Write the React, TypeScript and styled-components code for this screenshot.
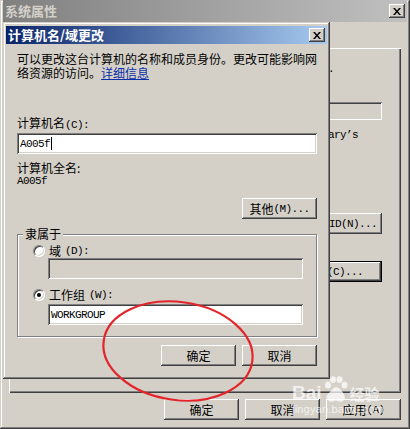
import React from 'react';
import styled, { createGlobalStyle, css } from 'styled-components';

const face = '#d4d0c8';
const shadow = '#808080';
const darkShadow = '#404040';
const highlight = '#ffffff';

const GlobalStyle = createGlobalStyle`
  html, body {
    margin: 0;
    padding: 0;
    background: ${face};
    overflow: hidden;
  }

  body {
    font-family: 'Noto Sans CJK SC', 'Liberation Sans', sans-serif;
    font-size: 12px;
    line-height: 14px;
    color: #000;
  }
`;

const windowEdge = css`
  box-shadow:
    inset -1px -1px ${darkShadow},
    inset 1px 1px ${face},
    inset -2px -2px ${shadow},
    inset 2px 2px ${highlight};
`;

const raisedEdge = css`
  box-shadow:
    inset -1px -1px ${darkShadow},
    inset 1px 1px ${highlight},
    inset -2px -2px ${shadow},
    inset 2px 2px ${face};
`;

const defaultEdge = css`
  box-shadow:
    inset -1px -1px #000,
    inset 1px 1px #000,
    inset -2px -2px ${darkShadow},
    inset 2px 2px ${highlight},
    inset -3px -3px ${shadow};
`;

const sunkenEdge = css`
  box-shadow:
    inset 1px 1px ${shadow},
    inset -1px -1px ${highlight},
    inset 2px 2px ${darkShadow},
    inset -2px -2px ${face};
`;

const Screen = styled.div`
  position: relative;
  width: 410px;
  height: 429px;
  overflow: hidden;
`;

const Latin = styled.span`
  font-family: 'Liberation Mono', monospace;
  font-size: 11px;
  letter-spacing: -0.6px;
`;

/* ---------- window chrome ---------- */

const OuterWindow = styled.div`
  box-sizing: border-box;
  width: 410px;
  height: 429px;
  padding: 0 3px 3px;
  display: flex;
  flex-direction: column;
  background: ${face};
  ${windowEdge}
`;

const TitleBar = styled.div<{ $active?: boolean }>`
  flex: none;
  display: flex;
  align-items: center;
  justify-content: space-between;
  height: ${(p) => (p.$active ? 18 : 22)}px;
  padding: 0 2px;
  background: ${(p) =>
    p.$active
      ? 'linear-gradient(to right, #0a246a, #a6caf0)'
      : 'linear-gradient(to right, #808080, #c0c0c0)'};
  color: ${(p) => (p.$active ? '#fff' : face)};
  font-size: 13px;
  font-weight: bold;
  line-height: 16px;
`;

const CloseButton = styled.div`
  box-sizing: border-box;
  width: 16px;
  height: 14px;
  display: flex;
  align-items: center;
  justify-content: center;
  background: ${face};
  ${raisedEdge}
`;

const CloseGlyph = () => (
  <svg width="8" height="7" viewBox="0 0 8 7">
    <path d="M0 0h2l2 2.4L6 0h2L5 3.5 8 7H6L4 4.6 2 7H0l3-3.5z" fill="#000" />
  </svg>
);

const Button = styled.button<{ $width?: number; $default?: boolean }>`
  box-sizing: border-box;
  flex: none;
  width: ${(p) => p.$width ?? 75}px;
  height: 21px;
  padding: 0;
  border: none;
  display: flex;
  align-items: center;
  justify-content: center;
  white-space: nowrap;
  background: ${face};
  color: #000;
  font: inherit;
  ${(p) => (p.$default ? defaultEdge : raisedEdge)}
`;

const Field = styled.div<{ $width?: number; $height?: number; $disabled?: boolean }>`
  box-sizing: border-box;
  flex: none;
  width: ${(p) => (p.$width ? `${p.$width}px` : 'auto')};
  height: ${(p) => p.$height ?? 21}px;
  padding: 0 3px;
  display: flex;
  align-items: center;
  background: ${(p) => (p.$disabled ? face : '#fff')};
  font-family: 'Liberation Mono', monospace;
  font-size: 11px;
  letter-spacing: -0.6px;
  ${sunkenEdge}
`;

const Caret = styled.span`
  width: 1px;
  height: 13px;
  margin-left: 1px;
  background: #000;
`;

/* ---------- system properties (behind) ---------- */

const TabPanel = styled.div`
  box-sizing: border-box;
  flex: none;
  height: 345px;
  margin: 26px 6px 0;
  padding: 12px 19px 0 0;
  display: flex;
  flex-direction: column;
  align-items: flex-end;
  box-shadow:
    inset 1px 1px ${highlight},
    inset -1px -1px ${darkShadow},
    inset -2px -2px ${shadow};
`;

const PanelText = styled.div<{ $right: number; $top: number }>`
  margin: ${(p) => p.$top}px ${(p) => p.$right}px 0 0;
  white-space: nowrap;
`;

const PanelButton = styled(Button)<{ $top: number }>`
  margin-top: ${(p) => p.$top}px;
`;

const ButtonRow = styled.div<{ $top: number; $gap: number; $right: number }>`
  display: flex;
  justify-content: flex-end;
  gap: ${(p) => p.$gap}px;
  margin-top: ${(p) => p.$top}px;
  padding-right: ${(p) => p.$right}px;
`;

/* ---------- 计算机名/域更改 dialog ---------- */

const Dialog = styled.div`
  position: absolute;
  left: 3px;
  top: 22px;
  box-sizing: border-box;
  width: 327px;
  height: 357px;
  padding: 4px 3px 3px;
  display: flex;
  flex-direction: column;
  background: ${face};
  ${windowEdge}
`;

const DialogBody = styled.div`
  display: flex;
  flex-direction: column;
  padding: 0 10px 0 11px;
`;

const Description = styled.p`
  margin: 8px 0 0;
  white-space: nowrap;
`;

const Link = styled.a`
  color: #0a2fa8;
  text-decoration: underline;
`;

const Label = styled.div<{ $top: number }>`
  margin-top: ${(p) => p.$top}px;
  white-space: nowrap;
`;

const Value = styled.div`
  font-family: 'Liberation Mono', monospace;
  font-size: 11px;
  letter-spacing: -0.6px;
  line-height: 12px;
`;

const Group = styled.fieldset`
  margin: 8px 0 0;
  padding: 3px 13px 11px 15px;
  min-inline-size: 0;
  border: 1px solid ${shadow};
  box-shadow: 1px 1px 0 ${highlight}, inset 1px 1px 0 ${highlight};
  display: flex;
  flex-direction: column;
  align-items: flex-start;
`;

const Legend = styled.legend`
  margin-left: -10px;
  padding: 0 2px;
  line-height: 14px;
  background: ${face};
`;

const RadioRow = styled.label<{ $top: number }>`
  display: flex;
  align-items: center;
  gap: 4px;
  height: 14px;
  margin-top: ${(p) => p.$top}px;
  white-space: nowrap;
`;

const Radio = styled.span<{ $checked?: boolean }>`
  box-sizing: border-box;
  width: 12px;
  height: 12px;
  border-radius: 50%;
  border: 1px solid;
  border-color: ${shadow} ${highlight} ${highlight} ${shadow};
  background: #fff;
  box-shadow: inset 1px 1px ${darkShadow}, inset -1px -1px ${face};
  display: flex;
  align-items: center;
  justify-content: center;

  &::after {
    content: '';
    display: ${(p) => (p.$checked ? 'block' : 'none')};
    width: 4px;
    height: 4px;
    border-radius: 50%;
    background: #000;
  }
`;

const GroupField = styled(Field)<{ $top: number }>`
  margin: ${(p) => p.$top}px 0 0 15px;
`;

/* ---------- overlays ---------- */

const Annotation = styled.svg`
  position: absolute;
  left: 0;
  top: 0;
  pointer-events: none;
`;

const Watermark = styled.div`
  position: absolute;
  left: 292px;
  top: 375px;
  display: flex;
  flex-direction: column;
  color: rgba(255, 255, 255, 0.72);
  pointer-events: none;
`;

const MarkRow = styled.div`
  display: flex;
  align-items: flex-end;
  height: 28px;
`;

const MarkWord = styled.span`
  font-family: 'Liberation Sans', sans-serif;
  font-size: 19px;
  font-weight: bold;
  line-height: 20px;
`;

const MarkCjk = styled.span`
  font-size: 15px;
  font-weight: bold;
  line-height: 18px;
`;

const MarkUrl = styled.span`
  font-family: 'Liberation Sans', sans-serif;
  font-size: 11px;
  line-height: 12px;
  letter-spacing: 0.2px;
`;

const Paw = () => (
  <svg width="28" height="27" viewBox="0 0 28 27" fill="rgba(255,255,255,0.72)">
    <ellipse cx="6" cy="9" rx="3" ry="3.6" />
    <ellipse cx="11" cy="3.6" rx="3" ry="3.4" />
    <ellipse cx="17.5" cy="3.6" rx="3" ry="3.4" />
    <ellipse cx="22.5" cy="9" rx="3" ry="3.6" />
    <path d="M14 11c-3 0-4.5 4-7.5 6.5S4 24 8 25.5c3 1 4-1 6-1s3 2 6 1c4-1.5 3-5.5 1.5-8S17 11 14 11z" />
  </svg>
);

export default function App() {
  return (
    <>
      <GlobalStyle />
      <Screen>
        <OuterWindow>
          <TitleBar>
            <span>系统属性</span>
            <CloseButton>
              <CloseGlyph />
            </CloseButton>
          </TitleBar>

          <TabPanel>
            <PanelText $top={0} $right={48}>
              Windows 使用以下信息在网络中标识这台计算机<Latin>.</Latin>
            </PanelText>
            <Field $width={130} $height={18} $disabled style={{ marginTop: 26 }} />
            <PanelText $top={6} $right={24}>
              <Latin>例如: "Kitchen Computer" 或 "Mary’s</Latin>
            </PanelText>
            <PanelButton $top={71} $width={82}>
              网络<Latin> ID(N)...</Latin>
            </PanelButton>
            <PanelButton $top={27} $width={98} $default>
              更改<Latin>(C)...</Latin>
            </PanelButton>
          </TabPanel>

          <ButtonRow $top={6} $gap={6} $right={6}>
            <Button>确定</Button>
            <Button>取消</Button>
            <Button>
              应用<Latin>(A)</Latin>
            </Button>
          </ButtonRow>
        </OuterWindow>

        <Dialog>
          <TitleBar $active>
            <span>计算机名/域更改</span>
            <CloseButton>
              <CloseGlyph />
            </CloseButton>
          </TitleBar>

          <DialogBody>
            <Description>
              可以更改这台计算机的名称和成员身份。更改可能影响网
              <br />
              络资源的访问。<Link>详细信息</Link>
            </Description>

            <Label $top={36}>
              计算机名<Latin>(C):</Latin>
            </Label>
            <Field style={{ marginTop: 1 }}>
              A005f
              <Caret />
            </Field>

            <Label $top={7}>计算机全名:</Label>
            <Value>A005f</Value>

            <Button style={{ alignSelf: 'flex-end', marginTop: 11 }}>
              其他<Latin>(M)...</Latin>
            </Button>

            <Group>
              <Legend>隶属于</Legend>
              <RadioRow $top={0}>
                <Radio />
                域<Latin>(D):</Latin>
              </RadioRow>
              <GroupField $top={0} $width={255} $disabled />
              <RadioRow $top={9}>
                <Radio $checked />
                工作组<Latin>(W):</Latin>
              </RadioRow>
              <GroupField $top={2} $width={255}>
                WORKGROUP
              </GroupField>
            </Group>

            <ButtonRow $top={8} $gap={6} $right={0}>
              <Button>确定</Button>
              <Button>取消</Button>
            </ButtonRow>
          </DialogBody>
        </Dialog>

        <Annotation width="410" height="429" viewBox="0 0 410 429">
          <ellipse
            cx="178"
            cy="351"
            rx="75"
            ry="49"
            transform="rotate(8 178 351)"
            fill="none"
            stroke="#e3242b"
            strokeWidth="2.2"
          />
        </Annotation>

        <Watermark>
          <MarkRow>
            <MarkWord>Bai</MarkWord>
            <Paw />
            <MarkCjk>经验</MarkCjk>
          </MarkRow>
          <MarkUrl>jingyan.baidu.com</MarkUrl>
        </Watermark>
      </Screen>
    </>
  );
}
